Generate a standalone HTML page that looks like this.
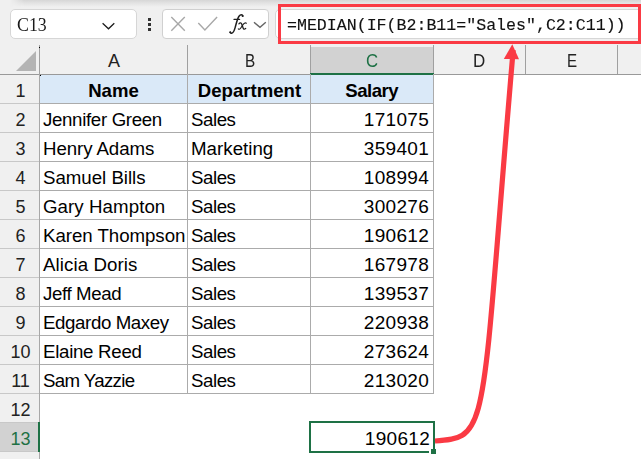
<!DOCTYPE html><html><head><meta charset="utf-8"><style>
*{margin:0;padding:0;box-sizing:border-box}
html,body{width:641px;height:459px;overflow:hidden;background:#fff}
body{position:relative;font-family:"Liberation Sans",sans-serif;color:#000}
.a{position:absolute}
.t{position:absolute;white-space:nowrap;font-size:18px;line-height:18px}
.hl{position:absolute;height:1px;background:#ababab}
.vl{position:absolute;width:1px;background:#ababab}
</style></head><body><div class="a" style="left:0;top:0;width:641px;height:47px;background:#f0f0f0"></div>
<div class="a" style="left:10px;top:0;width:631px;height:7px;background:linear-gradient(#d6d6d6,#e2e2e2 40%,#f0f0f0);-webkit-mask-image:linear-gradient(to right,transparent,#000 14px)"></div>
<div class="a" style="left:10px;top:9px;width:127px;height:30px;background:#fff;border:1px solid #d6d6d6;border-radius:5px"></div>
<div class="t" style="left:16.5px;top:16px;font-family:'Liberation Serif',serif;font-size:18px;line-height:19px;color:#1a1a1a;transform:scaleX(0.99);transform-origin:0 0">C13</div>
<svg class="a" style="left:100px;top:20px" width="16" height="12"><path d="M2.6 3.3 L8.5 8.8 L14.3 3.3" fill="none" stroke="#1a1a1a" stroke-width="1.25"/></svg>
<div class="a" style="left:148px;top:18px;width:3px;height:3px;background:#333"></div>
<div class="a" style="left:148px;top:23px;width:3px;height:3px;background:#333"></div>
<div class="a" style="left:148px;top:28px;width:3px;height:3px;background:#333"></div>
<div class="a" style="left:162px;top:9px;width:107px;height:30px;background:#fff;border:1px solid #d0d0d0;border-radius:4px"></div>
<svg class="a" style="left:168px;top:14px" width="20" height="20"><path d="M3.3 2.9 L16.8 16.8 M16.8 2.9 L3.3 16.8" fill="none" stroke="#a8a8a8" stroke-width="1.4"/></svg>
<svg class="a" style="left:195px;top:14px" width="26" height="20"><path d="M3.3 8.9 L9.9 15.9 L22.1 2.9" fill="none" stroke="#a8a8a8" stroke-width="1.4"/></svg>
<svg class="a" style="left:225px;top:12px" width="25" height="25"><g fill="none" stroke="#1e1e1e" stroke-linecap="round"><path d="M17.8 4 C17.6 2.4 15.4 2.3 14 4.2 C12.4 6.4 11.2 11.8 10.2 15.4 C9.4 18.4 8.4 20.6 7 21.1 C6.2 21.4 5.6 21 5.3 20.4" stroke-width="1.5"/><path d="M9 7.4 L14.6 7.4" stroke-width="1.2"/><path d="M13.9 11.8 C14.9 10.6 16.2 10.6 16.8 12.2 L18.1 16 C18.6 17.5 19.6 17.6 20.7 16.4" stroke-width="1.3"/><path d="M21.4 11.2 C20.4 10.5 19.4 11 18.4 12.2 L15.6 16.2 C14.8 17.4 13.9 17.6 13.3 16.9" stroke-width="1.1"/></g><circle cx="17.6" cy="3.9" r="1" fill="#1e1e1e"/><circle cx="5.2" cy="20.2" r="1" fill="#1e1e1e"/></svg>
<svg class="a" style="left:252px;top:19px" width="16" height="12"><path d="M2 3.3 L8 8.3 L13.8 3.3" fill="none" stroke="#666" stroke-width="1.4"/></svg>
<div class="a" style="left:275px;top:9px;width:380px;height:30px;background:#fff;border:1px solid #d6d6d6;border-radius:5px"></div>
<div class="t" style="left:287px;top:16.8px;font-family:'Liberation Mono',monospace;font-size:16.6px;line-height:17px;color:#111;-webkit-text-stroke:0.15px #111;transform:scaleY(0.95);transform-origin:0 13px">=MEDIAN(IF(B2:B11="Sales",C2:C11))</div>
<div class="a" style="left:278px;top:4px;width:363px;height:40px;border:3px solid #fa3a44"></div>
<div class="a" style="left:0;top:47px;width:641px;height:27px;background:#f0f0f0"></div>
<div class="a" style="left:310px;top:47px;width:123px;height:27px;background:#d2d2d2"></div>
<div class="a" style="left:0;top:74px;width:39px;height:385px;background:#f0f0f0"></div>
<div class="a" style="left:0;top:422px;width:39px;height:29px;background:#d2d2d2"></div>
<svg class="a" style="left:0;top:47px" width="39" height="27"><path d="M36 4 L36 24 L16 24 Z" fill="#b4b4b4"/></svg>
<div class="vl" style="left:39px;top:45px;height:29px;background:#a0a0a0"></div>
<div class="vl" style="left:187px;top:45px;height:29px;background:#a0a0a0"></div>
<div class="vl" style="left:310px;top:45px;height:29px;background:#a0a0a0"></div>
<div class="vl" style="left:433px;top:45px;height:29px;background:#a0a0a0"></div>
<div class="vl" style="left:525px;top:45px;height:29px;background:#a0a0a0"></div>
<div class="vl" style="left:617px;top:45px;height:29px;background:#a0a0a0"></div>
<div class="hl" style="left:0;top:74px;width:641px;background:#999"></div>
<div class="a" style="left:310px;top:73px;width:124px;height:2px;background:#1e7145"></div>
<div class="t" style="left:84px;width:60px;text-align:center;top:52px;color:#222;transform:scaleX(1.0)">A</div>
<div class="t" style="left:219.8px;width:60px;text-align:center;top:52px;color:#222;transform:scaleX(0.85)">B</div>
<div class="t" style="left:342.3px;width:60px;text-align:center;top:52px;color:#1e7145;transform:scaleX(0.93)">C</div>
<div class="t" style="left:449.3px;width:60px;text-align:center;top:52px;color:#222;transform:scaleX(0.94)">D</div>
<div class="t" style="left:542.3px;width:60px;text-align:center;top:52px;color:#222;transform:scaleX(0.84)">E</div>
<div class="hl" style="left:0;top:103px;width:39px;background:#c8c8c8"></div>
<div class="t" style="left:1px;width:39px;text-align:center;top:82px;color:#222">1</div>
<div class="hl" style="left:0;top:132px;width:39px;background:#c8c8c8"></div>
<div class="t" style="left:1px;width:39px;text-align:center;top:111px;color:#222">2</div>
<div class="hl" style="left:0;top:161px;width:39px;background:#c8c8c8"></div>
<div class="t" style="left:1px;width:39px;text-align:center;top:140px;color:#222">3</div>
<div class="hl" style="left:0;top:190px;width:39px;background:#c8c8c8"></div>
<div class="t" style="left:1px;width:39px;text-align:center;top:169px;color:#222">4</div>
<div class="hl" style="left:0;top:219px;width:39px;background:#c8c8c8"></div>
<div class="t" style="left:1px;width:39px;text-align:center;top:198px;color:#222">5</div>
<div class="hl" style="left:0;top:248px;width:39px;background:#c8c8c8"></div>
<div class="t" style="left:1px;width:39px;text-align:center;top:227px;color:#222">6</div>
<div class="hl" style="left:0;top:277px;width:39px;background:#c8c8c8"></div>
<div class="t" style="left:1px;width:39px;text-align:center;top:256px;color:#222">7</div>
<div class="hl" style="left:0;top:306px;width:39px;background:#c8c8c8"></div>
<div class="t" style="left:1px;width:39px;text-align:center;top:285px;color:#222">8</div>
<div class="hl" style="left:0;top:335px;width:39px;background:#c8c8c8"></div>
<div class="t" style="left:1px;width:39px;text-align:center;top:314px;color:#222">9</div>
<div class="hl" style="left:0;top:364px;width:39px;background:#c8c8c8"></div>
<div class="t" style="left:1px;width:39px;text-align:center;top:343px;color:#222">10</div>
<div class="hl" style="left:0;top:393px;width:39px;background:#c8c8c8"></div>
<div class="t" style="left:1px;width:39px;text-align:center;top:372px;color:#222">11</div>
<div class="hl" style="left:0;top:422px;width:39px;background:#c8c8c8"></div>
<div class="t" style="left:1px;width:39px;text-align:center;top:401px;color:#222">12</div>
<div class="hl" style="left:0;top:451px;width:39px;background:#c8c8c8"></div>
<div class="t" style="left:1px;width:39px;text-align:center;top:430px;color:#1e7145">13</div>
<div class="vl" style="left:39px;top:74px;height:385px;background:#a8a8a8"></div>
<div class="a" style="left:38px;top:422px;width:2px;height:30px;background:#1e7145"></div>
<div class="a" style="left:40px;top:75px;width:393px;height:28px;background:#dae9f8"></div>
<div class="hl" style="left:40px;top:103px;width:394px"></div>
<div class="hl" style="left:40px;top:132px;width:394px"></div>
<div class="hl" style="left:40px;top:161px;width:394px"></div>
<div class="hl" style="left:40px;top:190px;width:394px"></div>
<div class="hl" style="left:40px;top:219px;width:394px"></div>
<div class="hl" style="left:40px;top:248px;width:394px"></div>
<div class="hl" style="left:40px;top:277px;width:394px"></div>
<div class="hl" style="left:40px;top:306px;width:394px"></div>
<div class="hl" style="left:40px;top:335px;width:394px"></div>
<div class="hl" style="left:40px;top:364px;width:394px"></div>
<div class="hl" style="left:40px;top:393px;width:394px"></div>
<div class="vl" style="left:187px;top:74px;height:320px"></div>
<div class="vl" style="left:310px;top:74px;height:320px"></div>
<div class="vl" style="left:433px;top:74px;height:320px"></div>
<div class="t" style="left:53.5px;width:120px;text-align:center;top:81.5px;font-size:18.6px;line-height:18.6px;font-weight:bold;letter-spacing:0.0px">Name</div>
<div class="t" style="left:189.5px;width:120px;text-align:center;top:81.5px;font-size:18.6px;line-height:18.6px;font-weight:bold;letter-spacing:0.0px">Department</div>
<div class="t" style="left:311.75px;width:120px;text-align:center;top:81.5px;font-size:18.6px;line-height:18.6px;font-weight:bold;letter-spacing:-0.5px">Salary</div>
<div class="t" style="left:43px;top:110.8px;font-size:18.7px;line-height:18.7px;letter-spacing:-0.338px">Jennifer Green</div>
<div class="t" style="left:191px;top:110.8px;font-size:18.7px;line-height:18.7px;letter-spacing:-0.45px">Sales</div>
<div class="t" style="right:212px;top:111px;font-size:19px;letter-spacing:0.3px">171075</div>
<div class="t" style="left:43px;top:139.8px;font-size:18.7px;line-height:18.7px;letter-spacing:-0.09px">Henry Adams</div>
<div class="t" style="left:191px;top:139.8px;font-size:18.7px;line-height:18.7px;letter-spacing:0.025px">Marketing</div>
<div class="t" style="right:212px;top:140px;font-size:19px;letter-spacing:0.3px">359401</div>
<div class="t" style="left:43px;top:168.8px;font-size:18.7px;line-height:18.7px;letter-spacing:-0.024px">Samuel Bills</div>
<div class="t" style="left:191px;top:168.8px;font-size:18.7px;line-height:18.7px;letter-spacing:-0.45px">Sales</div>
<div class="t" style="right:212px;top:169px;font-size:19px;letter-spacing:0.3px">108994</div>
<div class="t" style="left:43px;top:197.8px;font-size:18.7px;line-height:18.7px;letter-spacing:0.066px">Gary Hampton</div>
<div class="t" style="left:191px;top:197.8px;font-size:18.7px;line-height:18.7px;letter-spacing:-0.45px">Sales</div>
<div class="t" style="right:212px;top:198px;font-size:19px;letter-spacing:0.3px">300276</div>
<div class="t" style="left:43px;top:226.8px;font-size:18.7px;line-height:18.7px;letter-spacing:-0.05px">Karen Thompson</div>
<div class="t" style="left:191px;top:226.8px;font-size:18.7px;line-height:18.7px;letter-spacing:-0.45px">Sales</div>
<div class="t" style="right:212px;top:227px;font-size:19px;letter-spacing:0.3px">190612</div>
<div class="t" style="left:43px;top:255.8px;font-size:18.7px;line-height:18.7px;letter-spacing:0.091px">Alicia Doris</div>
<div class="t" style="left:191px;top:255.8px;font-size:18.7px;line-height:18.7px;letter-spacing:-0.45px">Sales</div>
<div class="t" style="right:212px;top:256px;font-size:19px;letter-spacing:0.3px">167978</div>
<div class="t" style="left:43px;top:284.8px;font-size:18.7px;line-height:18.7px;letter-spacing:-0.375px">Jeff Mead</div>
<div class="t" style="left:191px;top:284.8px;font-size:18.7px;line-height:18.7px;letter-spacing:-0.45px">Sales</div>
<div class="t" style="right:212px;top:285px;font-size:19px;letter-spacing:0.3px">139537</div>
<div class="t" style="left:43px;top:313.8px;font-size:18.7px;line-height:18.7px;letter-spacing:-0.397px">Edgardo Maxey</div>
<div class="t" style="left:191px;top:313.8px;font-size:18.7px;line-height:18.7px;letter-spacing:-0.45px">Sales</div>
<div class="t" style="right:212px;top:314px;font-size:19px;letter-spacing:0.3px">220938</div>
<div class="t" style="left:43px;top:342.8px;font-size:18.7px;line-height:18.7px;letter-spacing:-0.29px">Elaine Reed</div>
<div class="t" style="left:191px;top:342.8px;font-size:18.7px;line-height:18.7px;letter-spacing:-0.45px">Sales</div>
<div class="t" style="right:212px;top:343px;font-size:19px;letter-spacing:0.3px">273624</div>
<div class="t" style="left:43px;top:371.8px;font-size:18.7px;line-height:18.7px;letter-spacing:-0.639px">Sam Yazzie</div>
<div class="t" style="left:191px;top:371.8px;font-size:18.7px;line-height:18.7px;letter-spacing:-0.45px">Sales</div>
<div class="t" style="right:212px;top:372px;font-size:19px;letter-spacing:0.3px">213020</div>
<div class="t" style="right:211px;top:430px;font-size:19px;letter-spacing:0.3px">190612</div>
<div class="a" style="left:309px;top:421px;width:126px;height:32px;border:2px solid #1e7145"></div>
<div class="a" style="left:429px;top:449px;width:8px;height:6px;background:#fff"></div>
<div class="a" style="left:431px;top:449px;width:5px;height:5px;background:#1e7145"></div>
<div class="a" style="left:39px;top:47px;width:1px;height:1px;background:#000"></div>
<div class="a" style="left:40px;top:75px;width:1px;height:1px;background:#000"></div>
<svg class="a" style="left:0;top:0" width="641" height="459"><path d="M435 441 C490.25 437.53 480.42 433.17 512.4 59 L513.2 50" fill="none" stroke="#fa3a44" stroke-width="5.2"/><path d="M512.3 44.3 L503.8 59 L519 59.3 Z" fill="#fa3a44"/></svg></body></html>
